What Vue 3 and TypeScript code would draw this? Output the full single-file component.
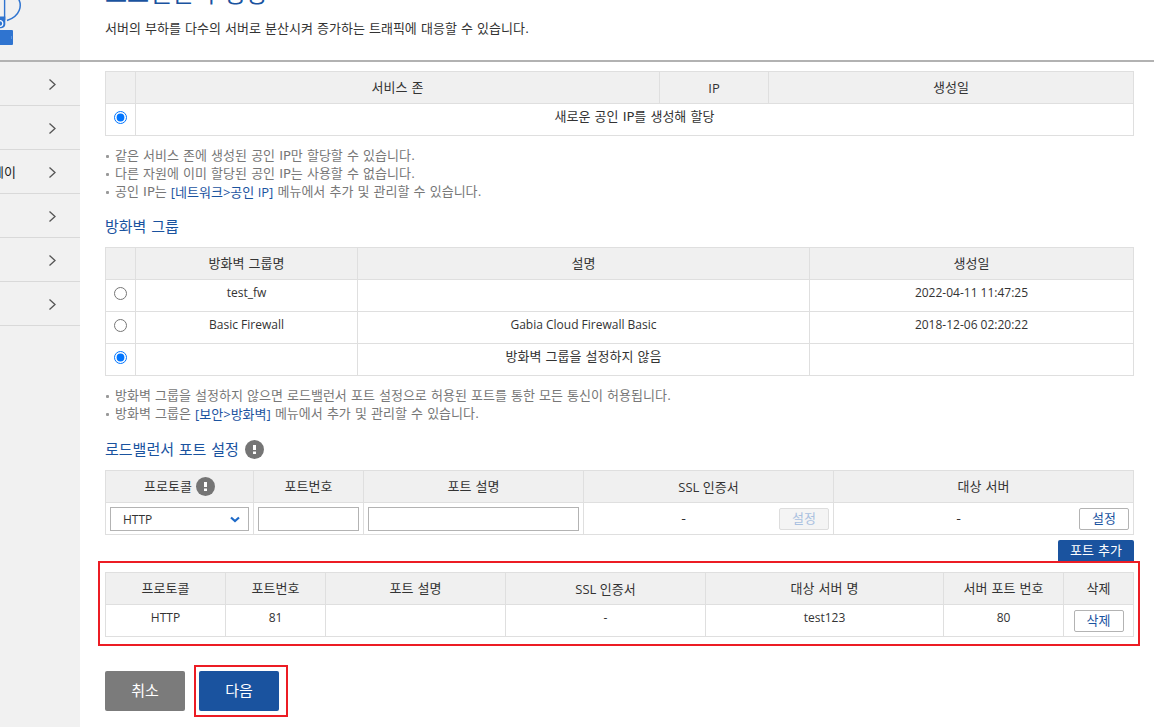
<script setup lang="ts">
import { ref } from 'vue'

interface Firewall {
  id: string
  name: string
  description: string
  created: string
}

const menu: string[] = ['', '', '게이트웨이', '', '', '']

const firewalls: Firewall[] = [
  { id: 'test', name: 'test_fw', description: '', created: '2022-04-11 11:47:25' },
  { id: 'basic', name: 'Basic Firewall', description: 'Gabia Cloud Firewall Basic', created: '2018-12-06 02:20:22' },
]

const publicIp = ref('new')
const firewall = ref('none')
const protocol = ref('HTTP')
const port = ref('')
const portDescription = ref('')
</script>

<template>
  <div class="page">
    <header class="top">
      <div class="brand">
        <svg class="emblem" width="24" height="48" viewBox="0 0 24 48" aria-hidden="true">
          <path d="M4.600 -2V20" fill="none" stroke="#2f74d0" stroke-width="1.400" />
          <path d="M0 16.500H5.300V24C5.300 27 3 28.300 0 28.300Z" fill="#2f74d0" />
          <circle cx="0" cy="23.500" r="2.800" fill="none" stroke="#fff" stroke-width="1.200" />
          <path d="M18 -2C22.500 5 20.500 16 7 20.500" fill="none" stroke="#2f74d0" stroke-width="1.500" />
          <rect x="-4" y="30" width="17" height="15" rx="1" fill="#2f74d0" />
          <path d="M11.500 36V39" stroke="#5d93dc" stroke-width="1" />
        </svg>
      </div>
      <div class="intro">
        <h1>로드밸런서 생성</h1>
        <p>서버의 부하를 다수의 서버로 분산시켜 증가하는 트래픽에 대응할 수 있습니다.</p>
      </div>
    </header>

    <div class="body">
      <nav class="side">
        <a v-for="(label, i) in menu" :key="i" href="#" :aria-label="label || '메뉴 펼치기'">
          <span class="label">{{ label }}</span>
          <svg width="9" height="13" viewBox="0 0 9 13" aria-hidden="true">
            <path d="M1.500 1.500L7 6.500L1.500 11.500" fill="none" stroke="#555" stroke-width="1.300" />
          </svg>
        </a>
      </nav>

      <main>
        <table>
          <colgroup><col class="w30" /><col class="fluid" /><col class="w109" /><col class="w365" /></colgroup>
          <thead>
            <tr><th></th><th>서비스 존</th><th class="mixed">IP</th><th>생성일</th></tr>
          </thead>
          <tbody>
            <tr>
              <td class="pick"><input id="ip-new" v-model="publicIp" type="radio" name="ip" value="new" /></td>
              <td colspan="3"><label for="ip-new">새로운 공인 IP를 생성해 할당</label></td>
            </tr>
          </tbody>
        </table>
        <ul class="notes">
          <li>같은 서비스 존에 생성된 공인 IP만 할당할 수 있습니다.</li>
          <li>다른 자원에 이미 할당된 공인 IP는 사용할 수 없습니다.</li>
          <li>공인 IP는 <a class="mixed" href="#">[네트워크&gt;공인 IP]</a> 메뉴에서 추가 및 관리할 수 있습니다.</li>
        </ul>

        <h2>방화벽 그룹</h2>
        <table>
          <colgroup><col class="w30" /><col class="w222" /><col class="fluid" /><col class="w324" /></colgroup>
          <thead>
            <tr><th></th><th>방화벽 그룹명</th><th>설명</th><th>생성일</th></tr>
          </thead>
          <tbody>
            <tr v-for="fw in firewalls" :key="fw.id">
              <td class="pick"><input :id="'fw-' + fw.id" v-model="firewall" type="radio" name="firewall" :value="fw.id" /></td>
              <td class="latin"><label :for="'fw-' + fw.id">{{ fw.name }}</label></td>
              <td class="latin">{{ fw.description }}</td>
              <td class="latin">{{ fw.created }}</td>
            </tr>
            <tr>
              <td class="pick"><input id="fw-none" v-model="firewall" type="radio" name="firewall" value="none" /></td>
              <td></td>
              <td><label for="fw-none">방화벽 그룹을 설정하지 않음</label></td>
              <td></td>
            </tr>
          </tbody>
        </table>
        <ul class="notes">
          <li>방화벽 그룹을 설정하지 않으면 로드밸런서 포트 설정으로 허용된 포트를 통한 모든 통신이 허용됩니다.</li>
          <li>방화벽 그룹은 <a class="mixed" href="#">[보안&gt;방화벽]</a> 메뉴에서 추가 및 관리할 수 있습니다.</li>
        </ul>

        <h2 class="with-help">
          로드밸런서 포트 설정
          <svg class="info" width="19" height="19" viewBox="0 0 19 19" aria-hidden="true">
            <circle cx="9.500" cy="9.500" r="9.500" fill="#757575" />
            <path d="M8 5H11V10H8ZM8 11.500H11V14H8Z" fill="#fff" />
          </svg>
        </h2>
        <table>
          <colgroup><col class="w148" /><col class="w110" /><col class="w220" /><col class="fluid" /><col class="w300" /></colgroup>
          <thead>
            <tr>
              <th>
                <span class="with-info">
                  <label for="protocol">프로토콜</label>
                  <svg class="info" width="19" height="19" viewBox="0 0 19 19" aria-hidden="true">
                    <circle cx="9.500" cy="9.500" r="9.500" fill="#757575" />
                    <path d="M8 5H11V10H8ZM8 11.500H11V14H8Z" fill="#fff" />
                  </svg>
                </span>
              </th>
              <th><label for="port">포트번호</label></th>
              <th><label for="port-description">포트 설명</label></th>
              <th class="mixed">SSL 인증서</th>
              <th>대상 서버</th>
            </tr>
          </thead>
          <tbody>
            <tr>
              <td class="field">
                <div class="select">
                  <select id="protocol" v-model="protocol">
                    <option>HTTP</option>
                    <option>HTTPS</option>
                    <option>TCP</option>
                  </select>
                  <svg class="arrow" width="10" height="7" viewBox="0 0 10 7" aria-hidden="true">
                    <path d="M1 1.500L5 5L9 1.500" fill="none" stroke="#1e6ac8" stroke-width="2.200" />
                  </svg>
                </div>
              </td>
              <td class="field"><input id="port" v-model="port" type="text" /></td>
              <td class="field"><input id="port-description" v-model="portDescription" type="text" /></td>
              <td class="field">
                <div class="setting"><span>-</span><button class="small" type="button" disabled>설정</button></div>
              </td>
              <td class="field">
                <div class="setting"><span>-</span><button class="small" type="button">설정</button></div>
              </td>
            </tr>
          </tbody>
        </table>

        <div class="add"><button type="button">포트 추가</button></div>

        <div class="marked ports">
          <table>
            <colgroup>
              <col class="w120" /><col class="w100" /><col class="w180" /><col class="w200" /><col class="fluid" /><col class="w120" /><col class="w70" />
            </colgroup>
            <thead>
              <tr>
                <th>프로토콜</th><th>포트번호</th><th>포트 설명</th><th class="mixed">SSL 인증서</th><th>대상 서버 명</th><th>서버 포트 번호</th><th>삭제</th>
              </tr>
            </thead>
            <tbody>
              <tr>
                <td class="latin">HTTP</td>
                <td class="latin">81</td>
                <td></td>
                <td class="latin">-</td>
                <td class="latin">test123</td>
                <td class="latin">80</td>
                <td class="field"><button class="small" type="button">삭제</button></td>
              </tr>
            </tbody>
          </table>
        </div>

        <div class="actions">
          <button class="cancel" type="button">취소</button>
          <div class="marked next"><button type="button">다음</button></div>
        </div>
      </main>
    </div>
  </div>
</template>

<style>
body {
  margin: 0;
  background: #fff;
}
</style>

<style scoped>
.page {
  display: flex;
  flex-direction: column;
  min-height: 100vh;
  margin-right: 19px;
  overflow: hidden;
  color: #333;
  font: 13px/18px 'DejaVu Sans', 'Noto Sans CJK KR', sans-serif;
}
.page * {
  box-sizing: border-box;
}
a {
  color: #1a539f;
  text-decoration: none;
}
button,
input,
select {
  margin: 0;
  font: inherit;
}
button {
  padding: 0;
  border: 0;
  border-radius: 2px;
  cursor: pointer;
}

.top {
  display: flex;
  height: 62px;
  overflow: hidden;
  border-bottom: 2px solid #b2b2b2;
}
.brand {
  flex: none;
  width: 80px;
  background: #f1f1f1;
}
.emblem {
  display: block;
}
.intro {
  padding-left: 25px;
}
h1 {
  margin: -22px 0 10px;
  color: #1a539f;
  font-size: 24px;
  font-weight: 400;
  line-height: 32px;
}
.intro p {
  margin: 0;
}

.body {
  display: flex;
  flex: 1;
}
.side {
  flex: none;
  width: 80px;
  overflow: hidden;
  background: #f1f1f1;
}
.side a {
  display: flex;
  align-items: center;
  justify-content: flex-end;
  height: 44px;
  padding: 2px 23px 0 0;
  border-bottom: 1px solid #d9d9d9;
  color: #222;
}
.side .label {
  margin-right: 32px;
  white-space: nowrap;
}
.side svg {
  flex: none;
}

main {
  flex: 1;
  min-width: 0;
  padding: 9px 20px 16px 25px;
}
table {
  width: 100%;
  table-layout: fixed;
  border-collapse: collapse;
}
th,
td {
  height: 32px;
  padding: 0;
  border: 1px solid #dfdfdf;
  font-weight: 400;
  text-align: center;
}
th {
  background: #f0f0f0;
}
td {
  padding-bottom: 5px;
}
.mixed {
  font-family: 'Open Sans', 'Noto Sans CJK KR', sans-serif;
}
.latin {
  font-family: 'Open Sans', sans-serif;
  font-size: 12px;
}
.pick {
  padding-bottom: 4px;
}
.pick input {
  display: block;
  width: 13px;
  height: 13px;
  margin: 0 auto;
}
.w30 { width: 30px; }
.w70 { width: 70px; }
.w100 { width: 100px; }
.w109 { width: 109px; }
.w110 { width: 110px; }
.w120 { width: 120px; }
.w148 { width: 148px; }
.w180 { width: 180px; }
.w200 { width: 200px; }
.w220 { width: 220px; }
.w222 { width: 222px; }
.w300 { width: 300px; }
.w324 { width: 324px; }
.w365 { width: 365px; }

.notes {
  margin: 11px 0 10px;
  padding: 0;
  color: #777;
  list-style: none;
}
.notes li {
  display: flex;
  align-items: center;
  white-space: pre;
}
.notes li::before {
  width: 3px;
  height: 3px;
  margin: 0 6px 0 1px;
  border-radius: 1px;
  background: #999;
  content: '';
}
h2 {
  display: flex;
  gap: 6px;
  align-items: center;
  height: 32px;
  margin: 0 0 4px;
  color: #1a539f;
  font-size: 15px;
  font-weight: 400;
}
.with-help {
  height: 33px;
}
.info {
  flex: none;
}
.with-info {
  display: flex;
  gap: 4px;
  align-items: center;
  justify-content: center;
}

.field {
  padding: 0 4px;
}
.field input,
select {
  display: block;
  width: 100%;
  height: 24px;
  border: 1px solid #b3b3b3;
  border-radius: 0;
  background: #fff;
}
.select {
  position: relative;
}
select {
  padding: 2px 12px 0;
  color: #333;
  font-family: 'Open Sans', sans-serif;
  font-size: 12px;
  appearance: none;
}
.arrow {
  position: absolute;
  top: 9px;
  right: 9px;
  pointer-events: none;
}
.setting {
  display: flex;
  align-items: center;
}
.setting span {
  flex: 1;
}
.small {
  width: 50px;
  height: 22px;
  border: 1px solid #b3b3b3;
  background: #fff;
  color: #1a539f;
  line-height: 20px;
}
.small:disabled {
  border-color: #ddd;
  background: #f4f4f4;
  color: #a9c0e0;
}

.add {
  display: flex;
  justify-content: flex-end;
  margin: 5px 0 10px;
}
.add button {
  width: 76px;
  height: 22px;
  border-radius: 2px 2px 0 0;
  background: #1a539f;
  color: #fff;
}
/* red frames that point out the registered port and the next step */
.marked {
  position: relative;
}
.marked::after {
  position: absolute;
  border: 2px solid #ec1c24;
  content: '';
  pointer-events: none;
}
.ports::after {
  inset: -11px -6px -9px -7px;
}
.next::after {
  inset: -6px -9px -6px -5px;
}
.actions {
  display: flex;
  gap: 14px;
  margin-top: 34px;
}
.actions button {
  display: block;
  width: 80px;
  height: 40px;
  background: #1a539f;
  color: #fff;
  font-size: 15px;
}
.actions .cancel {
  background: #7b7b7b;
}
</style>
